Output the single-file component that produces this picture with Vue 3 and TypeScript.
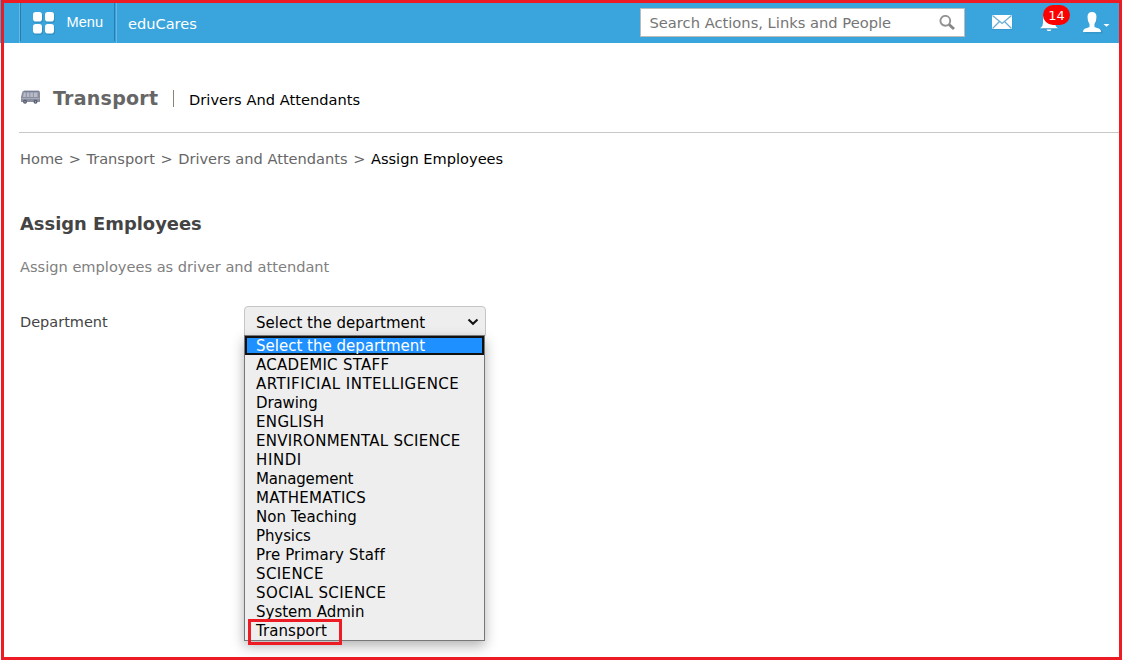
<script setup lang="ts">
interface Option { label: string; spacing: number }

const crumbs: string[] = ['Home', 'Transport', 'Drivers and Attendants']
const options: Option[] = [
  { label: 'Select the department', spacing: 0 },
  { label: 'ACADEMIC STAFF', spacing: 0.28 },
  { label: 'ARTIFICIAL INTELLIGENCE', spacing: 0.48 },
  { label: 'Drawing', spacing: -0.1 },
  { label: 'ENGLISH', spacing: 0.35 },
  { label: 'ENVIRONMENTAL SCIENCE', spacing: 0.26 },
  { label: 'HINDI', spacing: 0.6 },
  { label: 'Management', spacing: -0.15 },
  { label: 'MATHEMATICS', spacing: 0.22 },
  { label: 'Non Teaching', spacing: 0 },
  { label: 'Physics', spacing: -0.1 },
  { label: 'Pre Primary Staff', spacing: 0.14 },
  { label: 'SCIENCE', spacing: 0.4 },
  { label: 'SOCIAL SCIENCE', spacing: 0.4 },
  { label: 'System Admin', spacing: 0 },
  { label: 'Transport', spacing: 0.05 },
]
</script>

<template>
  <div class="page">
    <header class="topbar">
      <div class="menu">
        <svg class="grid-icon" width="22" height="24" viewBox="0 0 22 24">
          <g fill="#2b86b4" opacity=".6">
            <rect x="0" y="1" width="10" height="10" rx="3" /><rect x="12" y="1" width="10" height="10" rx="3" />
            <rect x="0" y="13" width="10" height="10" rx="3" /><rect x="12" y="13" width="10" height="10" rx="3" />
          </g>
          <g fill="#fff">
            <rect x="0" y="0" width="9" height="9.500" rx="2.800" /><rect x="12" y="0" width="9" height="9.500" rx="2.800" />
            <rect x="0" y="12" width="9" height="9.500" rx="2.800" /><rect x="12" y="12" width="9" height="9.500" rx="2.800" />
          </g>
        </svg>
        <span class="menu-text">Menu</span>
      </div>
      <span class="brand">eduCares</span>
      <div class="search">
        <span class="search-text">Search Actions, Links and People</span>
        <svg width="18" height="18" viewBox="0 0 18 18" fill="none">
          <circle cx="6.300" cy="5.800" r="4.900" stroke="#929292" stroke-width="1.900" />
          <path d="M10 9.500l5 4.500" stroke="#878787" stroke-width="3" />
        </svg>
      </div>
      <svg class="mail" width="22" height="17" viewBox="0 0 22 17">
        <rect x="0" y="2" width="20.500" height="14" fill="#2f83ae" opacity=".35" />
        <rect x="0" y="1" width="20" height="14" fill="#fff" />
        <path d="M.5 1.500l9.600 8 9.400-8M.5 14.500l7-7M19.500 14.500l-7-7" fill="none" stroke="#68afd4" stroke-width="1.300" />
      </svg>
      <div class="bell">
        <svg width="20" height="22" viewBox="0 0 20 22">
          <path d="M1 19.500c3-2 3-4 3-8C4 6 6 3 9.500 3S15 6 15 11.500c0 4 0 6 3 8z" fill="#2f83ae" opacity=".5" />
          <path d="M0 18.300c3-2 3-4 3-8C3 5 5 2 9 2s6 3 6 8c0 4 0 6.300 3 8.300zM6.500 19.500h5l-1.200 1.500H7.700z" fill="#fff" />
        </svg>
        <span class="badge">14</span>
      </div>
      <svg class="user" width="28" height="23" viewBox="0 0 28 23">
        <path d="M2 21.500q0-4 4-4.500l2-1V13Q6 10 6 6q0-4 4-4t4 4q0 4-2 7v3l4 1q4 .5 4 4.500z" fill="#2f83ae" opacity=".4" />
        <path d="M0 20q0-3.500 4-4l2.500-1v-3Q4.500 9.500 4.500 5q0-5 4.500-5t4.500 5q0 4.500-2 7v3l2.500 1q4 .5 4 4z" fill="#fff" />
        <path d="M20.500 12h6L23.500 14.800z" fill="#fff" />
      </svg>
    </header>

    <main class="content">
      <div class="titlebar">
        <svg class="bus" width="20" height="16" viewBox="0 0 20 16">
          <path d="M3 .8h14.500q1.500 0 1.500 2V12H0V7l1-4q.5-2.200 2-2.200z" fill="#8a8e9f" />
          <path d="M3 1.300h15" stroke="#777c90" />
          <path d="M2.800 2.500h2v4.500H2zM5.800 2.500h2.600v4.500H5.800zM9.300 2.500h2.600v4.500H9.300zM12.800 2.500h3.700v4.500h-3.700z" fill="#b8bcc8" />
          <path d="M.5 8.500h18" stroke="#a7abb9" />
          <circle cx="4" cy="11.800" r="2" fill="#555c70" /><circle cx="14.500" cy="11.800" r="2" fill="#555c70" />
          <circle cx="4" cy="11.800" r=".7" fill="#a8adbb" /><circle cx="14.500" cy="11.800" r=".7" fill="#a8adbb" />
        </svg>
        <h1>Transport</h1>
        <span class="divider"></span>
        <span class="subtitle">Drivers And Attendants</span>
      </div>
      <nav class="crumbs">
        <template v-for="crumb in crumbs" :key="crumb">
          <span>{{ crumb }}</span><span class="sep">&gt;</span>
        </template>
        <span class="current">Assign Employees</span>
      </nav>
      <h2>Assign Employees</h2>
      <p class="hint">Assign employees as driver and attendant</p>
      <div class="field">
        <span class="label">Department</span>
        <div class="select">
          <span>Select the department</span>
          <svg width="12" height="8" viewBox="0 0 12 8"><path d="M1.500 1.500L6 5.800l4.500-4.300" fill="none" stroke="#111" stroke-width="2" /></svg>
          <ul class="menu-list">
            <li v-for="(option, i) in options" :key="option.label" :class="{ active: i === 0 }">
              <span :style="{ letterSpacing: option.spacing + 'px' }">{{ option.label }}</span>
              <i v-if="i === options.length - 1" class="marker"></i>
            </li>
          </ul>
        </div>
      </div>
    </main>
    <div class="frame"></div>
  </div>
</template>

<style>
body { background: #fff; overflow: hidden; }
</style>

<style scoped>
* { box-sizing: border-box; }
.page { position: relative; width: 1122px; height: 662px; font: 15px/19px Verdana, "DejaVu Sans", sans-serif; color: #000; white-space: nowrap; overflow: hidden; }
.frame { position: absolute; left: 1px; top: 0; width: 1121px; height: 660px; border: 3px solid #ed1c24; }
.topbar { display: flex; height: 43px; background: #3aa5dd; color: #fff; padding-left: 19px; }
.menu { display: flex; width: 98px; height: 43px; padding: 12px 0 0 12px; border-left: 1px solid #65b8e3; border-right: 1px solid #65b8e3; background: linear-gradient(#2a7dab, #2a7dab) 0 0 / 1px 41px no-repeat, linear-gradient(#2a7dab, #2a7dab) 94px 0 / 1px 41px no-repeat; }
.grid-icon { margin-left: 1px; }
.menu-text { font: 14.6px/20px "Liberation Sans", Arial, sans-serif; margin-left: 11.5px; }
.brand { width: 523px; padding: 14px 0 0 11px; font-size: 14.6px; }
.search { display: flex; width: 325px; height: 29px; margin-top: 8px; background: #fff; border: 1px solid #bbb; color: #757575; padding: 4px 0 0 8.5px; }
.search-text { width: 289.5px; font-size: 14.7px; }
.search svg { margin-top: 2px; }
.mail { margin: 14px 0 0 27px; }
.bell { position: relative; width: 20px; margin: 10px 0 0 26px; }
.badge { position: absolute; left: 3px; top: -5px; width: 27px; height: 20px; border-radius: 10px; background: #f00; font-size: 13px; line-height: 21px; text-align: center; }
.user { margin: 12px 0 0 23px; }
.content { padding-left: 19px; }
.titlebar { display: flex; height: 90px; border-bottom: 1px solid #c8c8c8; padding-top: 45px; }
.bus { margin: 2px 0 0 2px; }
h1 { margin: -1px 0 0 12px; width: 120px; font-size: 19px; line-height: 23px; letter-spacing: .25px; color: #666; }
.divider { width: 1px; height: 17px; margin-top: 2px; background: #8d8178; }
.subtitle { margin: 2px 0 0 15px; font-size: 14.6px; letter-spacing: .03px; }
.crumbs { display: flex; height: 60px; padding: 16px 0 0 1px; color: #666; font-size: 14.6px; }
.sep { width: 23.3px; text-align: center; }
.current { color: #000; }
h2 { margin: 19px 0 0 1px; font-size: 17.9px; line-height: 24px; color: #444; }
.hint { margin: 21px 0 0 1px; color: #808080; font-size: 14.6px; }
.field { display: flex; margin-top: 30px; color: #444; }
.label { width: 225px; padding: 7px 0 0 1px; font-size: 14.5px; }
.select { position: relative; display: flex; justify-content: space-between; width: 242px; height: 32px; border: 1px solid #c6c6c6; border-radius: 4px; padding: 7px 6px 0 11px; background: #eee; color: #000; }
.select > svg { margin-top: 4px; }
.menu-list { position: absolute; left: -1px; top: 28px; width: 241px; height: 306px; margin: 0; padding: 0; list-style: none; background: #eee; border: 1px solid #777; box-shadow: 0 5px 12px rgba(0, 0, 0, .3); }
li { position: relative; height: 19px; line-height: 21px; padding-left: 11px; }
.active { height: 19px; color: #fff; background: #1e90ff; border: 2px solid #101010; padding-left: 9px; line-height: 17px; }
.marker { position: absolute; left: 3px; top: -2px; width: 94px; height: 26px; border: 3px solid #ed1c24; }
</style>
